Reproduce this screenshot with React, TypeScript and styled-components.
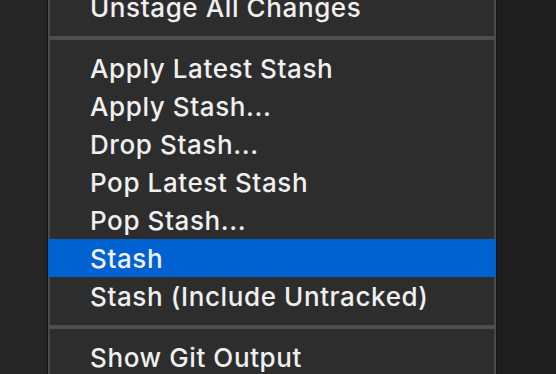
import styled, { createGlobalStyle } from "styled-components";

const GlobalStyle = createGlobalStyle`
  html, body {
    margin: 0;
    padding: 0;
    background: #1e1e1e;
    overflow: hidden;
  }
  body {
    font-family: Inter, "Liberation Sans", sans-serif;
  }
`;

type Entry = { label: string; active?: boolean } | "sep";

const entries: Entry[] = [
  { label: "Unstage All Changes" },
  "sep",
  { label: "Apply Latest Stash" },
  { label: "Apply Stash..." },
  { label: "Drop Stash..." },
  { label: "Pop Latest Stash" },
  { label: "Pop Stash..." },
  { label: "Stash", active: true },
  { label: "Stash (Include Untracked)" },
  "sep",
  { label: "Show Git Output" },
];

const App = () => {
  return (
    <>
      <GlobalStyle />
      <Screen>
        <SidePane />
        <Menu>
          <MenuList>
            {entries.map((entry, i) =>
              entry === "sep" ? (
                <Separator key={i} />
              ) : (
                <MenuItem key={i} $active={entry.active}>
                  {entry.label}
                </MenuItem>
              )
            )}
          </MenuList>
        </Menu>
        <EditorPane />
      </Screen>
    </>
  );
};

export default App;

const Screen = styled.div`
  display: flex;
  width: 100%;
  height: 374px;
  overflow: hidden;
`;

const SidePane = styled.div`
  width: 47px;
  flex-shrink: 0;
  background: linear-gradient(to right, #262626 80%, #222222);
`;

const EditorPane = styled.div`
  flex: 1;
  background: #1e1e1e;
`;

const Menu = styled.div`
  width: 448px;
  flex-shrink: 0;
  background: #2d2d2d;
  border-left: 1px solid #141414;
  border-right: 1px solid #141414;
  box-shadow: inset 2px 0 0 #4a4a4a, inset -2px 0 0 #4a4a4a;
`;

const MenuList = styled.div`
  display: flex;
  flex-direction: column;
  margin-top: -12px;
`;

const MenuItem = styled.div<{ $active?: boolean }>`
  height: 38px;
  display: flex;
  align-items: center;
  padding-left: 42px;
  font-size: 26px;
  font-weight: 500;
  color: #f0f0f0;
  letter-spacing: 0.6px;
  white-space: nowrap;
  background: ${(p) => (p.$active ? "#0062d0" : "transparent")};
`;

const Separator = styled.div`
  height: 4px;
  margin: 10px 0 9px;
  background: #4e4e4e;
`;
